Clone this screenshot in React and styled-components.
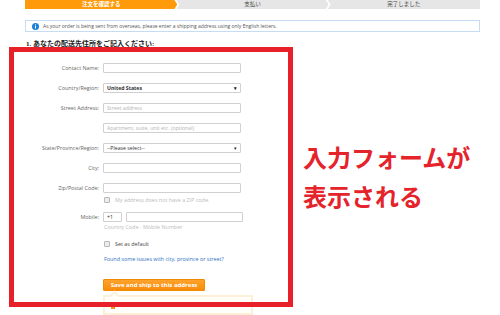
import React from "react";
import styled, { createGlobalStyle } from "styled-components";

const GlobalStyle = createGlobalStyle`
  html, body {
    margin: 0;
    padding: 0;
    background: #fff;
  }
  body {
    font-family: "Open Sans", "Liberation Sans", "Noto Sans CJK JP", sans-serif;
  }
`;

const steps = ["注文を確認する", "支払い", "完了しました"];

const arrowShape = (first, last) => {
  if (first) return "polygon(0 0, calc(100% - 3px) 0, 100% 50%, calc(100% - 3px) 100%, 0 100%)";
  if (last) return "polygon(0 0, 100% 0, 100% 100%, 0 100%, 3px 50%)";
  return "polygon(0 0, calc(100% - 3px) 0, 100% 50%, calc(100% - 3px) 100%, 0 100%, 3px 50%)";
};

function App() {
  return (
    <>
      <GlobalStyle />
      <Page>
        <Main>
          <Steps>
            {steps.map((s, i) => (
              <Step
                key={s}
                $active={i === 0}
                $first={i === 0}
                $last={i === steps.length - 1}
              >
                {s}
              </Step>
            ))}
          </Steps>

          <Notice>
            <InfoIcon viewBox="0 0 8 8">
              <circle cx="4" cy="4" r="4" fill="#1a7fd9" />
              <rect x="3.4" y="3.3" width="1.2" height="3" fill="#fff" />
              <circle cx="4" cy="2.1" r="0.7" fill="#fff" />
            </InfoIcon>
            As your order is being sent from overseas, please enter a shipping address using only English letters.
          </Notice>

          <Heading>1. あなたの配送先住所をご記入ください:</Heading>

          <FormArea>
            <Form>
              <Row>
                <Label>Contact Name:</Label>
                <Input />
              </Row>
              <Row>
                <Label>Country/Region:</Label>
                <Select $strong>
                  United States
                  <Caret>▾</Caret>
                </Select>
              </Row>
              <Row>
                <Label>Street Address:</Label>
                <Input placeholder="Street address" />
              </Row>
              <Row>
                <Label />
                <Input placeholder="Apartment, suite, unit etc. (optional)" />
              </Row>
              <Row>
                <Label>State/Province/Region:</Label>
                <Select>
                  --Please select--
                  <Caret>▾</Caret>
                </Select>
              </Row>
              <Row>
                <Label>City:</Label>
                <Input />
              </Row>
              <Row>
                <Label>Zip/Postal Code:</Label>
                <Input />
              </Row>
              <Check $gap={3}>
                <Box />
                <Muted>My address does not have a ZIP code.</Muted>
              </Check>
              <Row $top={9}>
                <Label>Mobile:</Label>
                <Input $width={19} defaultValue="+1" />
                <Input $width={117} $left={4} />
              </Row>
              <Hint>Country Code - Mobile Number</Hint>
              <Check $gap={10}>
                <Box />
                <span>Set as default</span>
              </Check>
              <Link>Found some issues with city, province or street?</Link>
              <SaveButton>Save and ship to this address</SaveButton>
              <Tip>
                <Warn>!</Warn>
              </Tip>
            </Form>

            <Callout>
              入力フォームが
              <br />
              表示される
            </Callout>
          </FormArea>
        </Main>

        <Frame />
      </Page>
    </>
  );
}

export default App;

const Page = styled.div`
  position: relative;
  width: 500px;
  height: 315px;
  overflow: hidden;
  background: #fff;
`;

const Main = styled.div`
  padding: 0 20px 0 25px;
`;

const Steps = styled.div`
  display: flex;
  height: 9px;
`;

const Step = styled.div`
  flex: 1;
  margin-left: ${(p) => (p.$first ? "0" : "-1px")};
  clip-path: ${(p) => arrowShape(p.$first, p.$last)};
  background: ${(p) => (p.$active ? "#ff9a0a" : "#e6e6e6")};
  color: ${(p) => (p.$active ? "#fff" : "#444")};
  font-family: "Noto Sans CJK JP", sans-serif;
  font-weight: ${(p) => (p.$active ? 700 : 400)};
  font-size: 5.5px;
  line-height: 9px;
  text-align: center;
`;

const Notice = styled.div`
  margin-top: 11px;
  height: 12px;
  box-sizing: border-box;
  border: 1px solid #c6dcf4;
  display: flex;
  align-items: center;
  gap: 4px;
  padding-left: 6px;
  font-size: 5px;
  color: #555;
  white-space: nowrap;
`;

const InfoIcon = styled.svg`
  width: 7px;
  height: 7px;
  flex: none;
`;

const Heading = styled.div`
  margin-top: 8px;
  padding-left: 1px;
  font-family: "Liberation Serif", "Noto Sans CJK JP", serif;
  font-weight: 700;
  font-size: 7px;
  line-height: 8px;
  color: #222;
`;

const FormArea = styled.div`
  display: flex;
  align-items: flex-start;
`;

const Form = styled.div`
  width: 260px;
  padding-top: 15px;
  font-size: 5.4px;
  color: #555;
`;

const Row = styled.div`
  display: flex;
  align-items: center;
  height: 10px;
  margin-top: ${(p) => (p.$top ?? 10)}px;
  &:first-child {
    margin-top: 0;
  }
`;

const Label = styled.div`
  width: 74px;
  margin-right: 4px;
  text-align: right;
  color: #666;
  white-space: nowrap;
`;

const Input = styled.input`
  width: ${(p) => p.$width ?? 138}px;
  margin-left: ${(p) => p.$left ?? 0}px;
  height: 10px;
  box-sizing: border-box;
  border: 1px solid #d0d0d0;
  border-radius: 1px;
  padding: 0 3px;
  font-family: inherit;
  font-size: 5.2px;
  color: #333;
  outline: none;
  background: #fff;
  &::placeholder {
    color: #b4b4b4;
  }
`;

const Select = styled.div`
  position: relative;
  width: 138px;
  height: 10px;
  box-sizing: border-box;
  border: 1px solid #d0d0d0;
  border-radius: 1px;
  padding: 0 3px;
  display: flex;
  align-items: center;
  font-size: 5.2px;
  color: #333;
  font-weight: ${(p) => (p.$strong ? 700 : 400)};
`;

const Caret = styled.span`
  margin-left: auto;
  font-size: 5px;
  color: #222;
`;

const Check = styled.div`
  display: flex;
  align-items: center;
  gap: 5px;
  height: 7px;
  margin-top: ${(p) => p.$gap}px;
  margin-left: 79px;
  color: #444;
`;

const Box = styled.span`
  width: 4px;
  height: 4px;
  border: 0.6px solid #b8b8b8;
  border-radius: 1px;
  background: #ececec;
`;

const Muted = styled.span`
  color: #bbb;
`;

const Hint = styled.div`
  margin-top: 2px;
  margin-left: 79px;
  height: 6px;
  line-height: 6px;
  color: #bbb;
`;

const Link = styled.div`
  margin-top: 9px;
  margin-left: 79px;
  height: 7px;
  line-height: 7px;
  color: #2e6fc2;
`;

const SaveButton = styled.button`
  display: block;
  margin: 16px 0 0 78px;
  width: 102px;
  height: 12px;
  padding: 0;
  border: 1px solid #f08a00;
  border-radius: 1px;
  background: linear-gradient(#ffa22b, #f88c0b);
  color: #fff;
  font-family: "Open Sans", "Liberation Sans", sans-serif;
  font-weight: 700;
  font-size: 6px;
`;

const Tip = styled.div`
  position: relative;
  margin: 4px 0 0 78px;
  width: 150px;
  height: 20px;
  box-sizing: border-box;
  border: 2px solid #fdf0d6;
  background: #fffefb;
  padding: 4px 6px;

  &::before {
    content: "";
    position: absolute;
    top: -5px;
    left: 6px;
    width: 5px;
    height: 5px;
    background: #fffefb;
    border-left: 2px solid #fdf0d6;
    border-top: 2px solid #fdf0d6;
    transform: rotate(45deg);
  }
`;

const Warn = styled.span`
  display: inline-block;
  width: 4px;
  height: 6px;
  background: #f7941d;
  color: transparent;
  font-size: 4px;
`;

const Callout = styled.div`
  margin-top: 89px;
  margin-left: 18px;
  font-family: "Noto Sans CJK JP", sans-serif;
  font-weight: 700;
  font-size: 24px;
  line-height: 39px;
  color: #e5232b;
  white-space: nowrap;
`;

const Frame = styled.div`
  position: absolute;
  left: 9px;
  top: 47px;
  width: 284px;
  height: 260px;
  box-sizing: border-box;
  border: 5px solid #e8202a;
  pointer-events: none;
`;
